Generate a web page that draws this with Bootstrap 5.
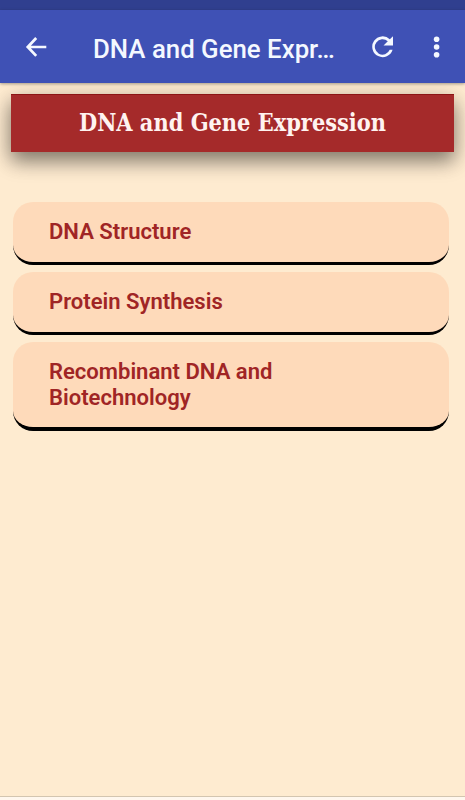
<!DOCTYPE html>
<html lang="en">
<head>
<meta charset="utf-8">
<meta name="viewport" content="width=device-width, initial-scale=1">
<title>DNA and Gene Expression</title>
<link rel="stylesheet" href="https://cdn.jsdelivr.net/npm/bootstrap@5.3.0/dist/css/bootstrap.min.css">
<style>
body { background: #feebd0; font-family: Roboto, sans-serif; height: 800px; overflow: hidden; }
.status-strip { height: 10px; background: #303f8f; }
.app-bar { height: 73px; background: #3f51b5; box-shadow: 0 1px 3px rgba(0,0,0,.35); padding: 0 16px 0 24px; position: relative; z-index: 1; }
.app-bar svg { fill: #f4f8ff; display: block; }
.app-title { color: #f4f8ff; font-size: 25.8px; font-weight: 500; line-height: 30px; margin-left: 45px; width: 246px; white-space: nowrap; margin-top: 4px; }
.icon-btn { width: 24px; height: 26px; }
.more-btn { margin-left: 30px; }
.heading-box { margin: 11px 11px 0; height: 58px; background: #a52a2a; border-top: 1px solid #8c1515; color: #fff3f0; box-shadow: 0 9px 18px rgba(0,0,0,.38), 0 7px 22px rgba(0,0,0,.19); }
.heading-box h1 { font-family: "DejaVu Serif Condensed", "DejaVu Serif", serif; font-stretch: condensed; font-size: 23.3px; font-weight: 700; white-space: nowrap; line-height: 28px; padding-bottom: 2px; }
.topics { margin: 51px 16px 0 13px; gap: 7px; }
.topic { background: #fedaba; color: #a02525; border-bottom: 3px solid #000; border-radius: 20px; padding: 17px 130px 17px 36px; font-size: 22.05px; line-height: 26px; font-weight: 600; text-decoration: none; }
.topic:first-child { margin-top: -1px; }
.topic:last-child { border-bottom-width: 4px; padding-bottom: 16px; }
.bottom-strip { height: 4px; background: #fff7ee; border-top: 1px solid #d3c5b0; }
</style>
</head>
<body class="d-flex flex-column">
<div class="status-strip flex-shrink-0"></div>
<nav class="app-bar d-flex align-items-center flex-shrink-0">
  <a href="#" class="icon-btn" aria-label="Back"><svg width="24" height="26" viewBox="0 0 24 26"><path d="M22.3 11.7H6.9l6.3-6.8-2-1.9L1.9 12.9l9.3 9.9 2-1.9-6.3-6.7h15.4z"/></svg></a>
  <div class="app-title">DNA and Gene Expr…</div>
  <a href="#" class="icon-btn ms-auto" aria-label="Reload"><svg width="24" height="26" viewBox="0 0 24 26"><path d="M18.8 5.2A10.4 10.4 0 1 0 21.6 15.8H18.7A7.7 7.7 0 1 1 16.8 7.3L12.5 11.6H22V2.2z"/></svg></a>
  <a href="#" class="icon-btn more-btn" aria-label="More"><svg width="24" height="26" viewBox="0 0 24 26"><circle cx="11.6" cy="5.3" r="2.8"/><circle cx="11.6" cy="13" r="2.8"/><circle cx="11.6" cy="20.7" r="2.8"/></svg></a>
</nav>
<header class="heading-box d-flex align-items-center justify-content-center flex-shrink-0">
  <h1 class="mb-0">DNA and Gene Expression</h1>
</header>
<main class="topics d-flex flex-column">
  <a href="#" class="topic">DNA Structure</a>
  <a href="#" class="topic">Protein Synthesis</a>
  <a href="#" class="topic">Recombinant DNA and Biotechnology</a>
</main>
<footer class="bottom-strip mt-auto flex-shrink-0"></footer>
<script src="https://cdn.jsdelivr.net/npm/bootstrap@5.3.0/dist/js/bootstrap.bundle.min.js"></script>
</body>
</html>
